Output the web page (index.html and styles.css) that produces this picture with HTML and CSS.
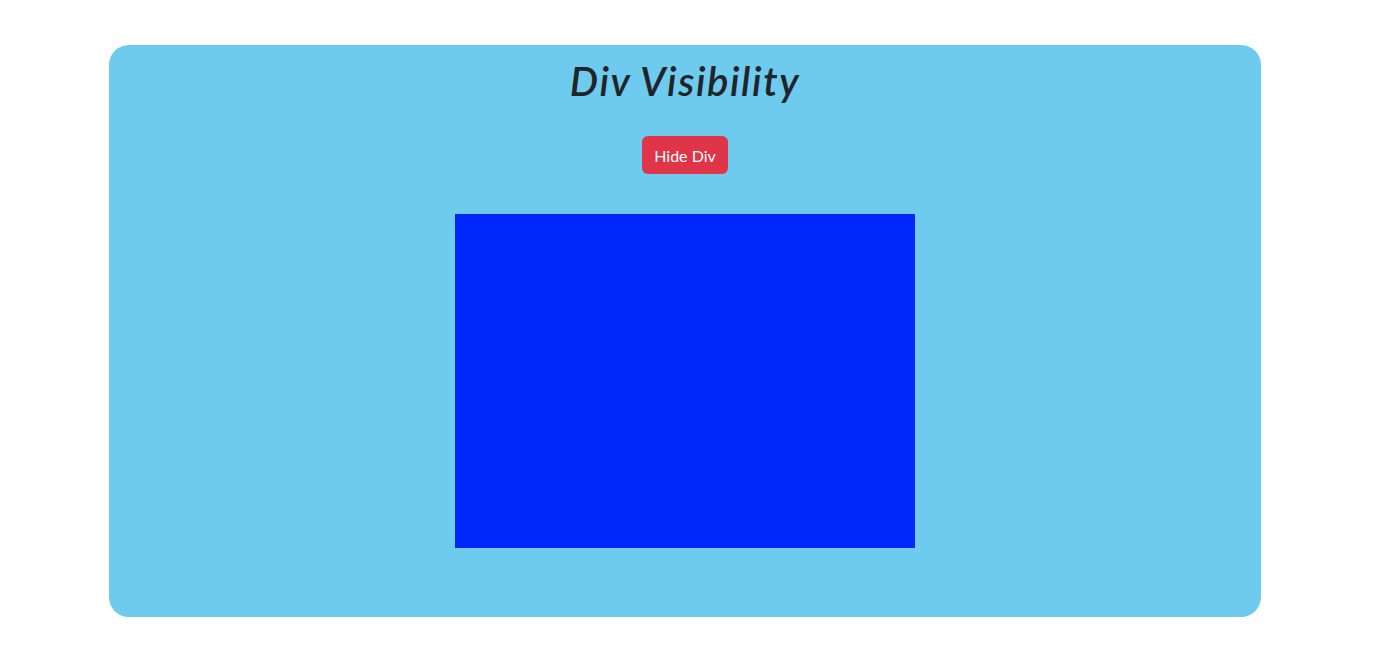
FILE: index.html
```html
<!DOCTYPE html>
<html lang="en">
<head>
<meta charset="utf-8">
<title>Div Visibility</title>
<link rel="stylesheet" href="styles.css">
</head>
<body>
<main class="card">
  <h1 class="title">Div Visibility</h1>
  <button class="btn-hide" type="button">Hide Div</button>
  <div class="box"></div>
</main>
</body>
</html>
```
FILE: styles.css
```css
html, body {
  margin: 0;
  padding: 0;
  background: #ffffff;
}
body {
  font-family: Lato, "Open Sans", sans-serif;
  color: #212529;
}
.card {
  box-sizing: border-box;
  width: 1152px;
  height: 572px;
  margin: 45px 0 0 109px;
  background: #6ecbed;
  border-radius: 20px;
  display: flex;
  flex-direction: column;
  align-items: center;
  padding-top: 10px;
}
.title {
  margin: 0;
  font-size: 40px;
  line-height: 52px;
  font-style: italic;
  font-weight: 600;
  letter-spacing: 1.6px;
  color: #212529;
}
.btn-hide {
  margin-top: 29px;
  width: 86px;
  height: 38px;
  border: none;
  border-radius: 6px;
  background: #e03448;
  color: #ffffff;
  font-family: Lato, "Open Sans", sans-serif;
  font-size: 16px;
  padding: 0;
  cursor: pointer;
}
.box {
  margin-top: 40px;
  width: 460px;
  height: 334px;
  background: #0026f9;
}
```
